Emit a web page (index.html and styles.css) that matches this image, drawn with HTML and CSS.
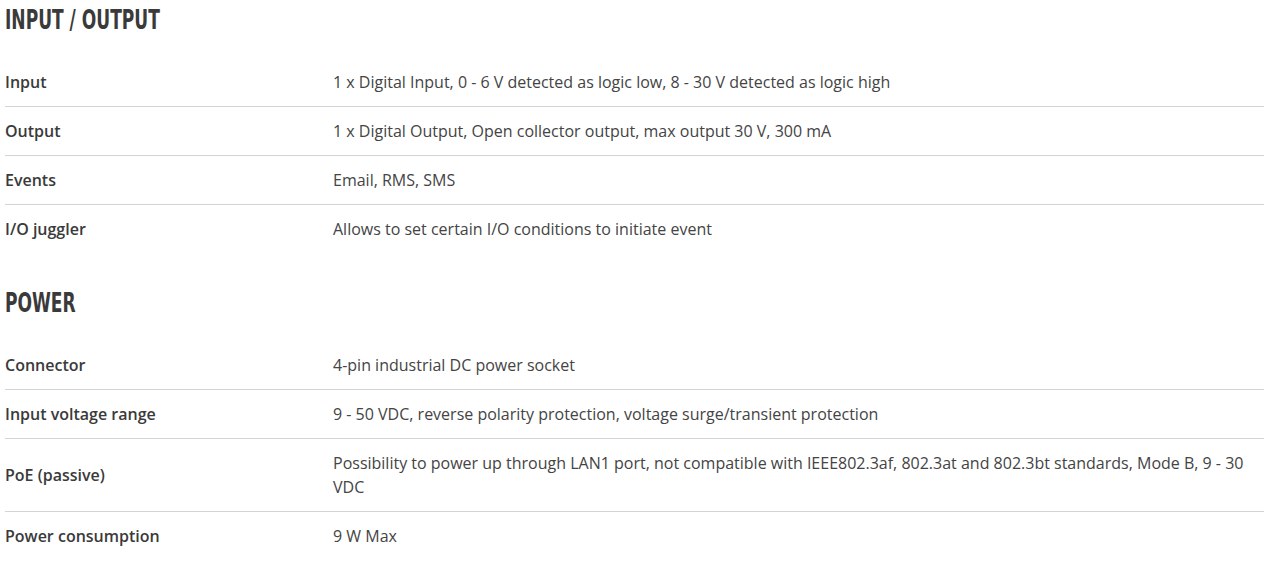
FILE: index.html
```html
<!DOCTYPE html>
<html lang="en">
<head>
<meta charset="utf-8">
<title>Specs</title>
<link rel="stylesheet" href="styles.css">
</head>
<body>
<div class="specs">
  <section class="group">
    <h2 class="group-title"><span class="title-text">INPUT / OUTPUT</span></h2>
    <div class="table">
      <div class="row"><div class="label">Input</div><div class="value">1 x Digital Input, 0 - 6 V detected as logic low, 8 - 30 V detected as logic high</div></div>
      <div class="row"><div class="label">Output</div><div class="value">1 x Digital Output, Open collector output, max output 30 V, 300 mA</div></div>
      <div class="row"><div class="label">Events</div><div class="value">Email, RMS, SMS</div></div>
      <div class="row"><div class="label">I/O juggler</div><div class="value">Allows to set certain I/O conditions to initiate event</div></div>
    </div>
  </section>
  <section class="group">
    <h2 class="group-title"><span class="title-text">POWER</span></h2>
    <div class="table">
      <div class="row"><div class="label">Connector</div><div class="value">4-pin industrial DC power socket</div></div>
      <div class="row"><div class="label">Input voltage range</div><div class="value">9 - 50 VDC, reverse polarity protection, voltage surge/transient protection</div></div>
      <div class="row"><div class="label">PoE (passive)</div><div class="value">Possibility to power up through LAN1 port, not compatible with IEEE802.3af, 802.3at and 802.3bt standards, Mode B, 9 - 30 VDC</div></div>
      <div class="row"><div class="label">Power consumption</div><div class="value">9 W Max</div></div>
    </div>
  </section>
</div>
</body>
</html>
```
FILE: styles.css
```css
html, body {
  margin: 0;
  padding: 0;
  background: #ffffff;
}
body {
  font-family: "Open Sans", "Liberation Sans", sans-serif;
  color: #444444;
  font-size: 16px;
  line-height: 24px;
}
.specs {
  padding: 5px 5px 0 5px;
}
.group + .group {
  margin-top: 35px;
}
.group-title {
  margin: 0 0 23px 0;
  font-family: "DejaVu Sans Condensed", "DejaVu Sans", sans-serif;
  font-stretch: condensed;
  font-weight: bold;
  font-size: 26px;
  line-height: 30px;
  color: #3a3a3a;
}
.title-text {
  display: inline-block;
  transform: scaleX(0.73);
  transform-origin: left center;
}
.row {
  display: grid;
  grid-template-columns: 328px 1fr;
  align-items: center;
  padding: 12px 0;
  border-bottom: 1px solid #d4d4d4;
}
.row:last-child {
  border-bottom: none;
}
.label {
  font-weight: 600;
  color: #3a3a3a;
}
.value {
  padding-right: 10px;
}
```
